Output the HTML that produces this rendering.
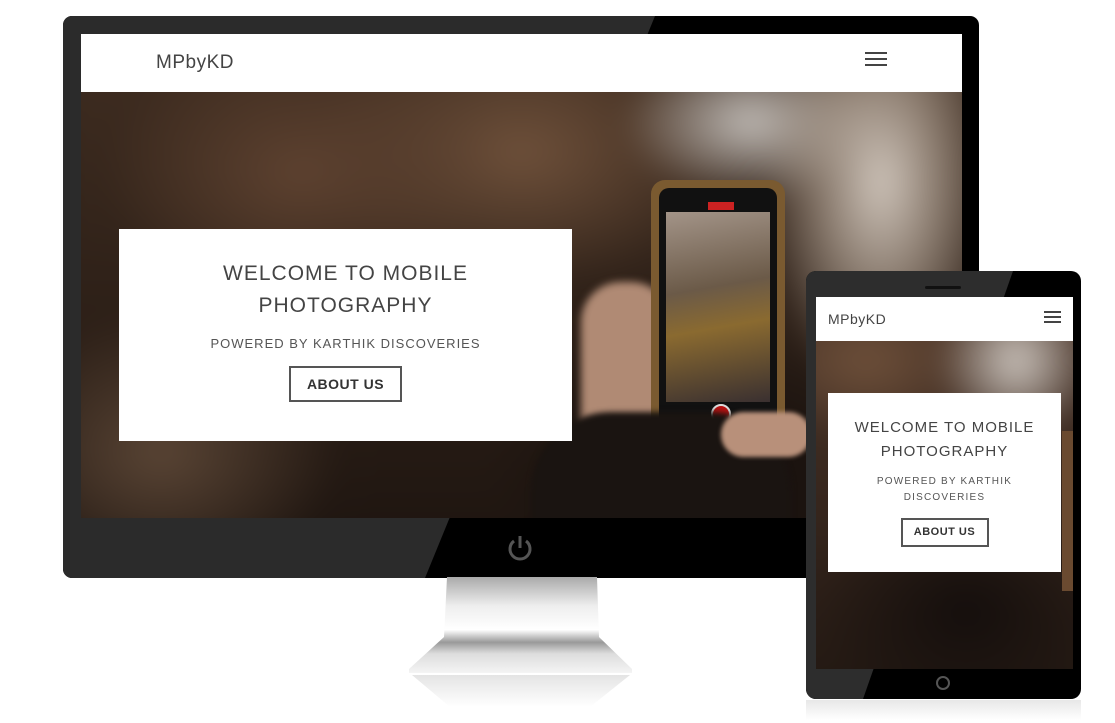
<!DOCTYPE html>
<html><head><meta charset="utf-8"><style>
*{margin:0;padding:0;box-sizing:border-box}
body{width:1115px;height:723px;background:#fff;position:relative;overflow:hidden;font-family:"Liberation Sans",sans-serif}
.abs{position:absolute}
.hero{background:#2e2018;overflow:hidden}
.hero .bl{position:absolute;inset:-30px;filter:blur(14px)}
.card{background:#fff;text-align:center;color:#444;position:absolute}
.btn{display:inline-block;border:2px solid #555;color:#333;font-weight:bold}
</style></head><body>
<!-- monitor -->
<div class="abs" style="left:63px;top:16px;width:916px;height:562px;border-radius:9px;background:#000;overflow:hidden">
<div class="abs" style="left:0;top:0;width:916px;height:562px;background:#2b2b2b;clip-path:polygon(0 0,592px 0,362px 562px,0 562px)"></div>
</div>
<svg class="abs" style="left:505px;top:532px" width="30" height="32" viewBox="0 0 30 32"><path d="M9 9 A10 10 0 1 0 21 9" fill="none" stroke="#555" stroke-width="3"/><line x1="15" y1="4" x2="15" y2="16" stroke="#555" stroke-width="3"/></svg>
<!-- stand -->
<svg class="abs" style="left:400px;top:577px" width="240" height="140" viewBox="0 0 240 140">
<defs><linearGradient id="g" x1="0" y1="0" x2="0" y2="1"><stop offset="0" stop-color="#aaa"/><stop offset=".3" stop-color="#eee"/><stop offset=".55" stop-color="#fff"/><stop offset=".68" stop-color="#999"/><stop offset=".8" stop-color="#ddd"/><stop offset="1" stop-color="#f4f4f4"/></linearGradient>
<linearGradient id="r" x1="0" y1="0" x2="0" y2="1"><stop offset="0" stop-color="#e4e4e4"/><stop offset="1" stop-color="#fff"/></linearGradient></defs>
<path d="M47 0 L197 0 L199 60 L232 92 L232 96 L9 96 L9 92 L44 60 Z" fill="url(#g)"/>
<path d="M12 98 L230 98 L190 130 L50 130 Z" fill="url(#r)"/>
</svg>
<!-- desktop screen -->
<div class="abs hero" style="left:81px;top:92px;width:881px;height:426px">
<div class="bl" style="background:
radial-gradient(ellipse 120px 220px at 830px 120px,#d0c6bc 0,rgba(190,175,160,.6) 50%,transparent 100%),
radial-gradient(ellipse 130px 80px at 700px 60px,#c4bfba 0,transparent 100%),
radial-gradient(ellipse 200px 140px at 250px 110px,#5e4230 0,transparent 100%),
radial-gradient(ellipse 220px 140px at 470px 90px,#6e503a 0,transparent 100%),
radial-gradient(ellipse 180px 140px at 110px 390px,#5a4535 0,transparent 100%),
radial-gradient(ellipse 220px 140px at 650px 400px,#140e0c 0,transparent 100%),
linear-gradient(180deg,#3e2c20,#1e1510)"></div>
<div class="abs" style="left:500px;top:190px;width:90px;height:200px;background:#b08a74;border-radius:40px;filter:blur(4px)"></div>
<div class="abs" style="left:570px;top:88px;width:134px;height:268px;background:#7a5a30;border-radius:14px"></div>
<div class="abs" style="left:578px;top:96px;width:118px;height:252px;background:#111;border-radius:10px"></div>
<div class="abs" style="left:585px;top:120px;width:104px;height:190px;background:linear-gradient(170deg,#a39488,#6b5a48 40%,#8a6a30 60%,#3a3030)"></div>
<div class="abs" style="left:627px;top:110px;width:26px;height:8px;background:#c22"></div>
<div class="abs" style="left:630px;top:312px;width:20px;height:20px;border-radius:50%;background:#b11;border:2px solid #ddd"></div>
<div class="abs" style="left:450px;top:320px;width:260px;height:140px;background:#1a1411;border-radius:80px 80px 0 0;filter:blur(3px)"></div>
<div class="abs" style="left:640px;top:320px;width:90px;height:45px;background:#b8907a;border-radius:25px;filter:blur(2px)"></div>
</div>
<div class="abs" style="left:81px;top:34px;width:881px;height:58px;background:#fff">
<div class="abs" style="left:75px;top:18px;font-size:19px;color:#444;letter-spacing:.5px">MPbyKD</div>
<div class="abs" style="left:784px;top:18px;width:22px;height:2px;background:#444;box-shadow:0 6px 0 #444,0 12px 0 #444"></div>
</div>
<div class="card" style="left:119px;top:229px;width:453px;height:212px">
<div style="margin-top:29px;font-size:21px;line-height:32px;letter-spacing:1px">WELCOME TO MOBILE<br>PHOTOGRAPHY</div>
<div style="margin-top:14px;font-size:13px;letter-spacing:1px;color:#555">POWERED BY KARTHIK DISCOVERIES</div>
<div class="btn" style="margin-top:15px;width:113px;height:36px;line-height:32px;font-size:14px;letter-spacing:.5px">ABOUT US</div>
</div>
<!-- tablet -->
<div class="abs" style="left:806px;top:271px;width:275px;height:428px;border-radius:10px;background:#000;overflow:hidden">
<div class="abs" style="left:0;top:0;width:275px;height:428px;background:#2d2d2d;clip-path:polygon(0 0,207px 0,57px 428px,0 428px)"></div>
</div>
<div class="abs" style="left:925px;top:286px;width:36px;height:3px;background:#111;border-radius:2px"></div>
<div class="abs" style="left:936px;top:676px;width:14px;height:14px;border:2px solid #555;border-radius:50%"></div>
<div class="abs hero" style="left:816px;top:341px;width:257px;height:328px">
<div class="bl" style="background:
radial-gradient(ellipse 80px 80px at 230px 50px,#d0c9c2 0,transparent 100%),
radial-gradient(ellipse 120px 80px at 80px 50px,#6e503a 0,transparent 100%),
radial-gradient(ellipse 160px 120px at 180px 300px,#140e0c 0,transparent 100%),
linear-gradient(180deg,#4a3428,#221812)"></div>
<div class="abs" style="left:246px;top:90px;width:11px;height:160px;background:#6a4a30"></div>
</div>
<div class="abs" style="left:816px;top:297px;width:257px;height:44px;background:#fff">
<div class="abs" style="left:12px;top:14px;font-size:14px;color:#444;letter-spacing:.5px">MPbyKD</div>
<div class="abs" style="left:228px;top:14px;width:17px;height:2px;background:#444;box-shadow:0 5px 0 #444,0 10px 0 #444"></div>
</div>
<div class="card" style="left:828px;top:393px;width:233px;height:179px">
<div style="margin-top:23px;font-size:15px;line-height:24px;letter-spacing:1px">WELCOME TO MOBILE<br>PHOTOGRAPHY</div>
<div style="margin-top:10px;font-size:10px;line-height:16px;letter-spacing:1.2px;color:#555">POWERED BY KARTHIK<br>DISCOVERIES</div>
<div class="btn" style="margin-top:12px;width:88px;height:29px;line-height:25px;font-size:11px;letter-spacing:.5px">ABOUT US</div>
</div>
<div class="abs" style="left:806px;top:700px;width:275px;height:20px;background:linear-gradient(#ddd,#fff);opacity:.7"></div>
</body></html>
